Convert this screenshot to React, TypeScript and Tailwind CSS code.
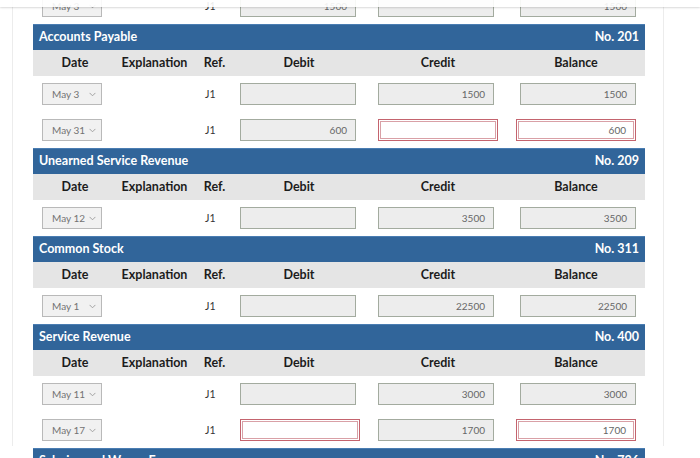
import React from "react";

type Row = {
  date: string;
  debit?: string;
  credit?: string;
  balance?: string;
  redDebit?: boolean;
  redCredit?: boolean;
  redBalance?: boolean;
};

type Section = { title: string; no: string; rows: Row[]; hideHead?: boolean };

const Sel = ({ v }: { v: string }) => (
  <div className="w-[60px] h-[22px] border border-[#b9b9b9] bg-[#f1f1f1] flex items-center justify-between pl-[9px] pr-[5px] text-[10px] text-[#737373] shrink-0">
    <span>{v}</span>
    <svg width="7" height="5" viewBox="0 0 7 5">
      <path d="M0.6 0.9 L3.5 3.8 L6.4 0.9" fill="none" stroke="#9a9a9a" strokeWidth="0.9" />
    </svg>
  </div>
);

const RedInp = ({ v }: { v?: string }) => (
  <div className="w-[120px] h-[22px] bg-white border border-[#c4646e] shadow-[inset_0_0_0_1px_#ffffff,inset_0_0_0_2px_#d9a0a6] flex items-center justify-end pr-[9px] text-[10px] text-[#666]">
    {v}
  </div>
);

const GrayInp = ({ v }: { v?: string }) => (
  <div className="w-[116px] h-[22px] bg-[#ededed] border border-[#a3ab9f] flex items-center justify-end pr-[8px] text-[10px] text-[#676767]">
    {v}
  </div>
);

const Cell = ({ v, red }: { v?: string; red?: boolean }) =>
  red ? <RedInp v={v} /> : <GrayInp v={v} />;

const DataRow = ({ r }: { r: Row }) => (
  <div className="flex items-center h-[36px] pl-[9px]">
    <Sel v={r.date} />
    <div className="w-[138px] pl-[103px] text-[10.5px] leading-[22px] text-[#333] shrink-0">J1</div>
    <div className="w-[120px] flex justify-start shrink-0">
      <Cell v={r.debit} red={r.redDebit} />
    </div>
    <div className="w-[120px] ml-[18px] flex justify-start shrink-0">
      <Cell v={r.credit} red={r.redCredit} />
    </div>
    <div className="w-[120px] ml-[18px] flex justify-end shrink-0">
      <Cell v={r.balance} red={r.redBalance} />
    </div>
  </div>
);

const SectionView = ({ s }: { s: Section }) => (
  <div>
    {!s.hideHead && (
      <>
        <div className="h-[26px] bg-[#31659a] border-t border-[#4a7db2] flex items-center justify-between px-[6px] text-white font-bold text-[12.5px]">
          <span>{s.title}</span>
          <span>{s.no}</span>
        </div>
        <div className="h-[26px] bg-[#e5e5e5] flex items-center font-bold text-[12.5px] text-[#1c1c1c]">
          <div className="w-[84px] text-center">Date</div>
          <div className="w-[75px] text-center">Explanation</div>
          <div className="w-[45px] text-center">Ref.</div>
          <div className="w-[124px] text-center">Debit</div>
          <div className="w-[154px] text-center">Credit</div>
          <div className="w-[122px] text-center">Balance</div>
        </div>
      </>
    )}
    {s.rows.map((r, i) => (
      <DataRow key={i} r={r} />
    ))}
  </div>
);

const sections: Section[] = [
  { title: "", no: "", hideHead: true, rows: [{ date: "May 3", debit: "1500", balance: "1500" }] },
  {
    title: "Accounts Payable",
    no: "No. 201",
    rows: [
      { date: "May 3", credit: "1500", balance: "1500" },
      { date: "May 31", debit: "600", redCredit: true, balance: "600", redBalance: true },
    ],
  },
  {
    title: "Unearned Service Revenue",
    no: "No. 209",
    rows: [{ date: "May 12", credit: "3500", balance: "3500" }],
  },
  {
    title: "Common Stock",
    no: "No. 311",
    rows: [{ date: "May 1", credit: "22500", balance: "22500" }],
  },
  {
    title: "Service Revenue",
    no: "No. 400",
    rows: [
      { date: "May 11", credit: "3000", balance: "3000" },
      { date: "May 17", redDebit: true, credit: "1700", balance: "1700", redBalance: true },
    ],
  },
  {
    title: "Salaries and Wages Expense",
    no: "No. 726",
    rows: [],
  },
];

export default function App() {
  return (
    <div
      className="relative w-[700px] h-[458px] overflow-hidden bg-white"
      style={{ fontFamily: "Lato, 'Open Sans', sans-serif" }}
    >
      <div className="ml-[12px] w-[652px] h-[458px] border-l border-r border-[#ececec] pl-[20px]">
        <div className="w-[612px] mt-[-12px]">
          {sections.map((s, i) => (
            <SectionView key={i} s={s} />
          ))}
        </div>
      </div>
      <div className="absolute top-0 left-0 w-full h-[7px] bg-white/90 shadow-[0_1px_2px_rgba(0,0,0,0.15)]" />
    </div>
  );
}
